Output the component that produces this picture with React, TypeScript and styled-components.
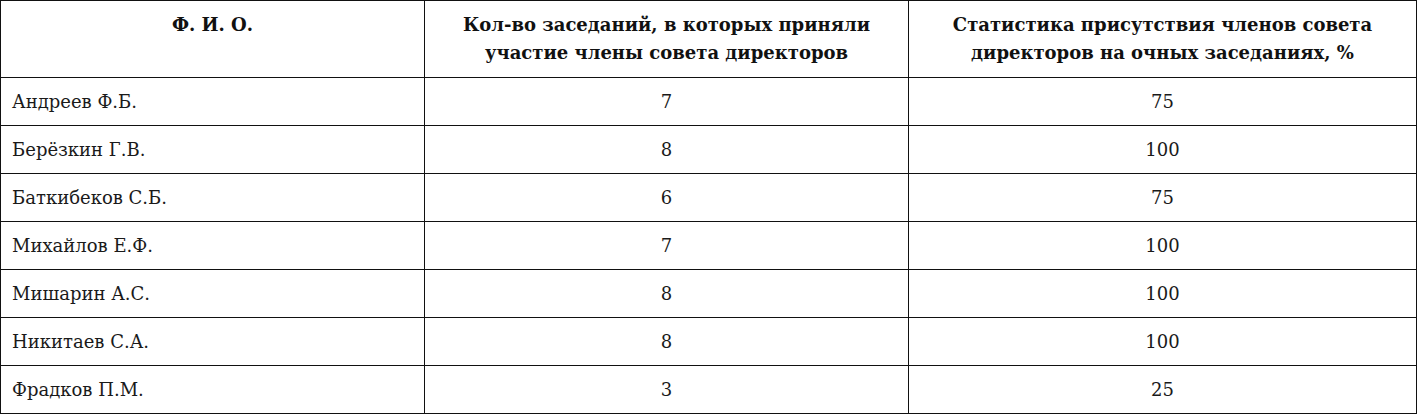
import React from "react";
import styled, { createGlobalStyle } from "styled-components";

const Global = createGlobalStyle`
  html, body { margin: 0; padding: 0; background: #ffffff; }
  body { font-family: "DejaVu Serif", "Liberation Serif", serif; color: #111111; }
`;

const Table = styled.table`
  border-collapse: collapse;
  width: 1416px;
  table-layout: fixed;
  font-family: "DejaVu Serif", "Liberation Serif", serif;
`;

const Col = styled.col<{ $w: number }>`
  width: ${(p) => p.$w}px;
`;

const HeadCell = styled.th`
  border: 1.5px solid #111111;
  height: 77px;
  padding: 10px 24px 0;
  vertical-align: top;
  font-size: 18px;
  font-weight: 700;
  line-height: 28px;
  text-align: center;
  color: #111111;
  box-sizing: border-box;
`;

const Cell = styled.td<{ $align?: "left" | "center" }>`
  border: 1.5px solid #111111;
  height: 48px;
  padding: 0 11px;
  vertical-align: middle;
  font-size: 18px;
  line-height: 24px;
  text-align: ${(p) => p.$align ?? "center"};
  color: #1a1a1a;
  box-sizing: border-box;
`;

const rows: [string, number, number][] = [
  ["Андреев Ф.Б.", 7, 75],
  ["Берёзкин Г.В.", 8, 100],
  ["Баткибеков С.Б.", 6, 75],
  ["Михайлов Е.Ф.", 7, 100],
  ["Мишарин А.С.", 8, 100],
  ["Никитаев С.А.", 8, 100],
  ["Фрадков П.М.", 3, 25],
];

export default function App() {
  return (
    <>
      <Global />
      <Table>
        <colgroup>
          <Col $w={424} />
          <Col $w={484} />
          <Col $w={508} />
        </colgroup>
        <thead>
          <tr>
            <HeadCell>Ф. И. О.</HeadCell>
            <HeadCell>Кол-во заседаний, в которых приняли участие члены совета директоров</HeadCell>
            <HeadCell>Статистика присутствия членов совета директоров на очных заседаниях, %</HeadCell>
          </tr>
        </thead>
        <tbody>
          {rows.map(([name, count, pct]) => (
            <tr key={name}>
              <Cell $align="left">{name}</Cell>
              <Cell>{count}</Cell>
              <Cell>{pct}</Cell>
            </tr>
          ))}
        </tbody>
      </Table>
    </>
  );
}
